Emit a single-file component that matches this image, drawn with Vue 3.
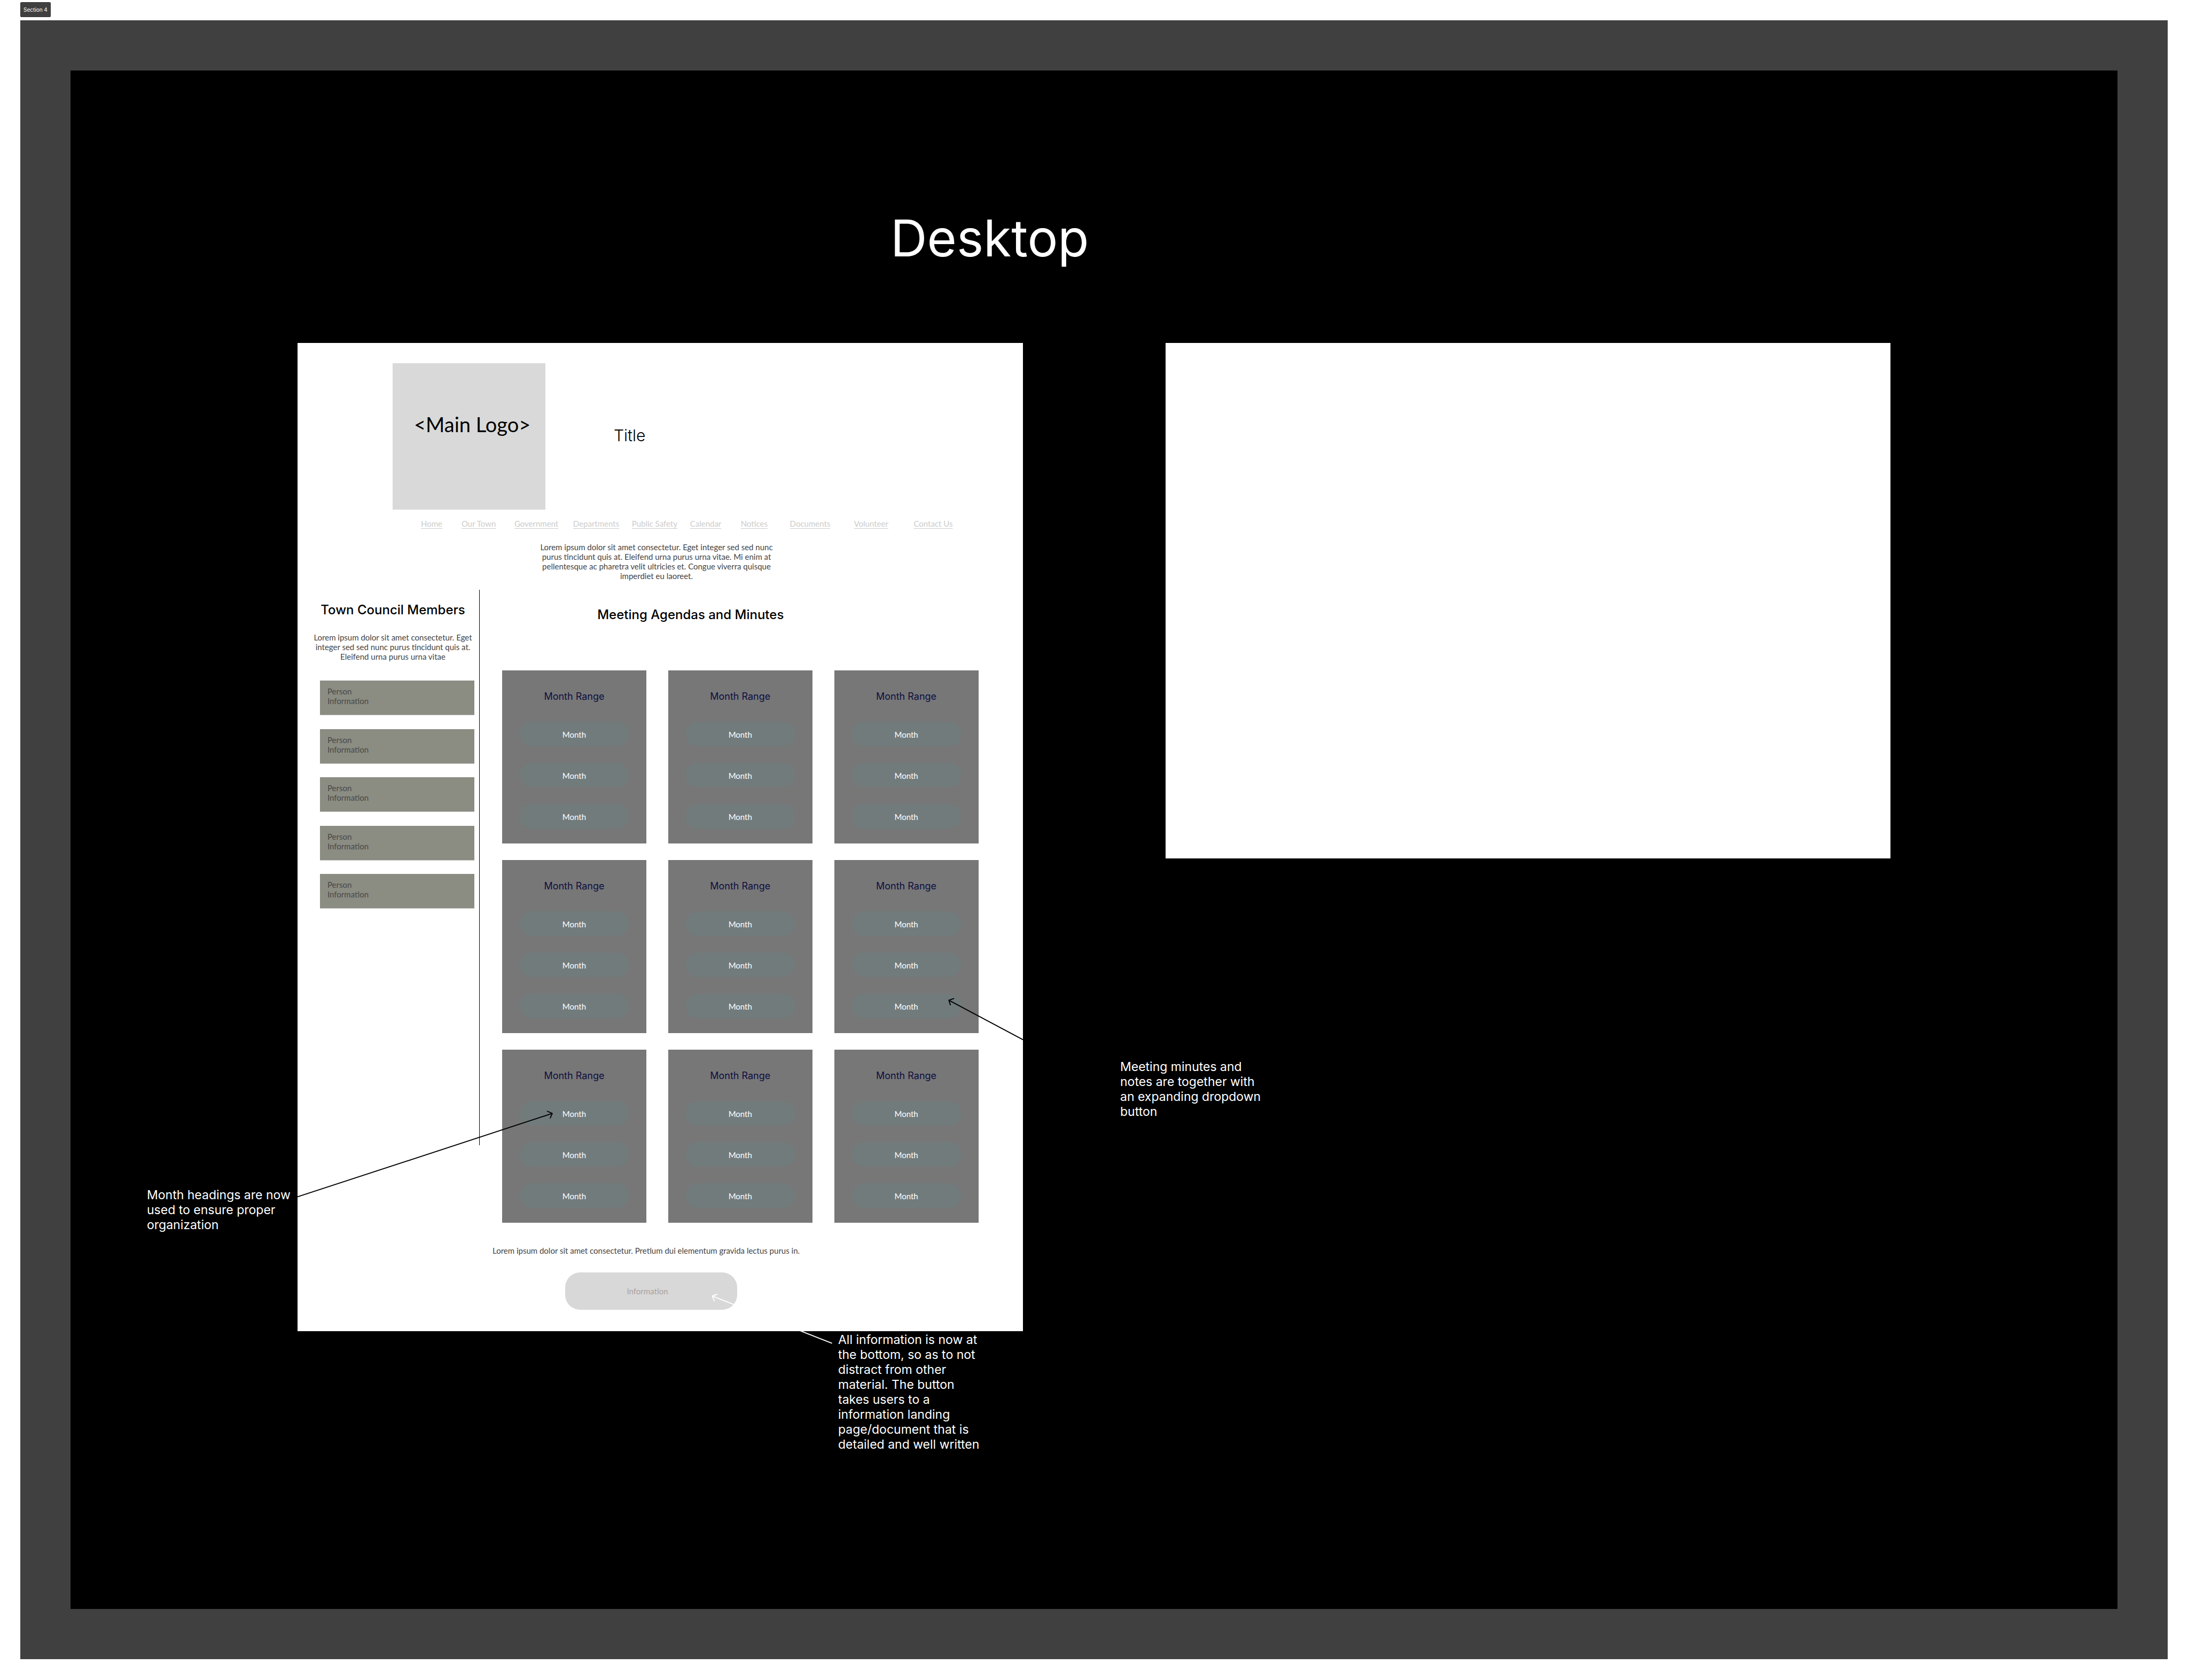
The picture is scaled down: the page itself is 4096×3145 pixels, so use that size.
<script setup>
const links = [
  'Home', 'Our Town', 'Government', 'Departments', 'Public Safety',
  'Calendar', 'Notices', 'Documents', 'Volunteer', 'Contact Us',
]
const people = 5
const ranges = 9
const months = 3
</script>

<template>
  <div class="page">
    <div class="tag">Section 4</div>
    <section class="section">
      <main class="board">
        <h1 class="board-title">Desktop</h1>

        <div class="artboards">
          <article class="artboard">
            <header class="masthead">
              <div class="logo">&lt;Main Logo&gt;</div>
              <h2 class="site-title">Title</h2>
            </header>

            <nav class="nav">
              <a v-for="link in links" :key="link" href="#">{{ link }}</a>
            </nav>

            <p class="intro">
              Lorem ipsum dolor sit amet consectetur. Eget integer sed sed nunc
              purus tincidunt quis at. Eleifend urna purus urna vitae. Mi enim at
              pellentesque ac pharetra velit ultricies et. Congue viverra quisque
              imperdiet eu laoreet.
            </p>

            <div class="columns">
              <aside class="council">
                <h3>Town Council Members</h3>
                <p>
                  Lorem ipsum dolor sit amet consectetur. Eget integer sed sed nunc
                  purus tincidunt quis at. Eleifend urna purus urna vitae
                </p>
                <ul class="people">
                  <li v-for="n in people" :key="n">Person<br />Information</li>
                </ul>
              </aside>

              <section class="meetings">
                <h3>Meeting Agendas and Minutes</h3>
                <div class="ranges">
                  <div v-for="r in ranges" :key="r" class="range">
                    <h4>Month Range</h4>
                    <button v-for="m in months" :key="m" type="button" class="month">Month</button>
                  </div>
                </div>
              </section>
            </div>

            <footer class="footer">
              <p>Lorem ipsum dolor sit amet consectetur. Pretium dui elementum gravida lectus purus in.</p>
              <button type="button" class="info">Information</button>
            </footer>
          </article>

          <div class="artboard empty"></div>
        </div>

        <svg class="arrows" viewBox="0 0 4065 3056" preserveAspectRatio="none" aria-hidden="true">
          <path d="M451 2237.3 956.7 2071.7M947 2067.3 956.7 2071.7 952.7 2080.7" stroke="#000" />
          <path d="M1891 1925 1744.3 1846.8M1754 1843.5 1744.3 1846.8 1747.3 1856" stroke="#000" />
          <path d="M1511.5 2528 1274.4 2434.3M1284 2431 1274.4 2434.3 1278.6 2444" stroke="#fff" />
        </svg>

        <p class="note note-headings">Month headings are now used to ensure proper organization</p>
        <p class="note note-dropdown">Meeting minutes and notes are together with an expanding dropdown button</p>
        <p class="note note-info">
          All information is now at the bottom, so as to not distract from other
          material. The button takes users to a information landing
          page/document that is detailed and well written
        </p>
      </main>
    </section>
  </div>
</template>

<style>
body {
  background: #fff;
}
</style>

<style scoped>
.page {
  padding: 4px 38px 38px;
  font-family: Lato, sans-serif;
  font-size: 15px;
  line-height: 18px;
  color: #444;
}

h1, h2, h3, h4, p, ul {
  margin: 0;
  padding: 0;
  font-weight: 400;
}

button {
  border: 0;
  padding: 0;
  font: inherit;
}

.tag {
  width: fit-content;
  height: 28px;
  margin-bottom: 6px;
  padding: 0 5px;
  box-sizing: border-box;
  border: 1px solid #333;
  border-radius: 2px;
  background: #404040;
  color: #fff;
  font: 10px/26px Inter, sans-serif;
}

.section {
  padding: 94px;
  background: #404040;
}

.board {
  position: relative;
  padding: 0 425px 520px;
  background: #000;
}

.board-title {
  padding: 254px 0 136px 1110px;
  color: #fff;
  font: 95px/120px Inter, sans-serif;
}

.artboards {
  display: grid;
  grid-template-columns: 1fr 1fr;
  gap: 267px;
  align-items: start;
}

.artboard {
  background: #fff;
}

.empty {
  height: 965px;
}

.masthead {
  display: grid;
  grid-template-columns: 286px 1fr;
  gap: 128px;
  padding: 38px 0 0 178px;
}

.logo {
  height: 274px;
  box-sizing: border-box;
  padding: 91px 0 0 40px;
  background: #d9d9d9;
  color: #000;
  font-size: 38px;
  line-height: 46px;
}

.site-title {
  padding-top: 115px;
  color: #000;
  font: 300 30px/40px Inter, sans-serif;
}

.nav {
  display: grid;
  grid-template-columns: 76fr 99fr 110fr 110fr 109fr 95fr 92fr 120fr 112fr 73fr;
  margin-top: 17px;
  padding: 0 131px 0 231px;
  white-space: nowrap;
}

.nav a {
  justify-self: start;
  color: #ccc;
  text-decoration: underline 1px;
  text-underline-offset: 3px;
  text-decoration-skip-ink: none;
}

.intro {
  width: 452px;
  margin: 26px 0 0 446px;
  text-align: center;
}

.columns {
  display: grid;
  grid-template-columns: 341px 1fr;
  align-items: start;
  margin-top: 17px;
}

.council {
  min-height: 1040px;
  box-sizing: border-box;
  padding: 24px 9px 0 26px;
  border-right: 1px solid #000;
  text-align: center;
}

h3 {
  color: #000;
  font: 500 24px/28px Inter, sans-serif;
}

.council p {
  margin-top: 28px;
}

.people {
  display: grid;
  align-content: space-between;
  height: 427px;
  margin: 36px 0 0 16px;
  list-style: none;
  text-align: left;
}

.people li {
  height: 65px;
  box-sizing: border-box;
  padding: 11px 14px;
  border-bottom: 1px solid #c4c4c0;
  background: #8b8c82;
  color: #484848;
}

.meetings {
  padding: 33px 83px 0 42px;
}

.meetings h3 {
  margin-right: 186px;
  text-align: center;
}

.ranges {
  display: grid;
  grid-template-columns: repeat(3, 1fr);
  gap: 31px 41px;
  margin-top: 90px;
}

.range {
  display: flex;
  flex-direction: column;
  gap: 31px;
  height: 324px;
  box-sizing: border-box;
  padding: 37px 33px 0;
  background: #777;
}

.range h4 {
  margin-bottom: 4px;
  color: #0f0f40;
  font: 18px/24px Inter, sans-serif;
  text-align: center;
}

.month {
  height: 46px;
  padding-top: 2px;
  border-radius: 22px;
  background: #727b7c;
  color: #fff;
}

.footer {
  padding: 43px 0 40px 365px;
}

.info {
  display: block;
  width: 322px;
  height: 70px;
  margin: 32px 0 0 136px;
  padding-right: 14px;
  border-radius: 28px;
  background: #d8d8d8;
  color: #a8a2a2;
}

.arrows {
  position: absolute;
  inset: 0;
  width: 100%;
  height: 100%;
  fill: none;
  stroke-width: 2px;
  stroke-linecap: round;
  stroke-linejoin: round;
  pointer-events: none;
}

.note {
  position: absolute;
  width: 277px;
  color: #fff;
  font: 23px/28px Inter, sans-serif;
}

.note-headings {
  left: 143px;
  top: 2091px;
}

.note-dropdown {
  left: 1965px;
  top: 1851px;
}

.note-info {
  left: 1437px;
  top: 2362px;
}
</style>
